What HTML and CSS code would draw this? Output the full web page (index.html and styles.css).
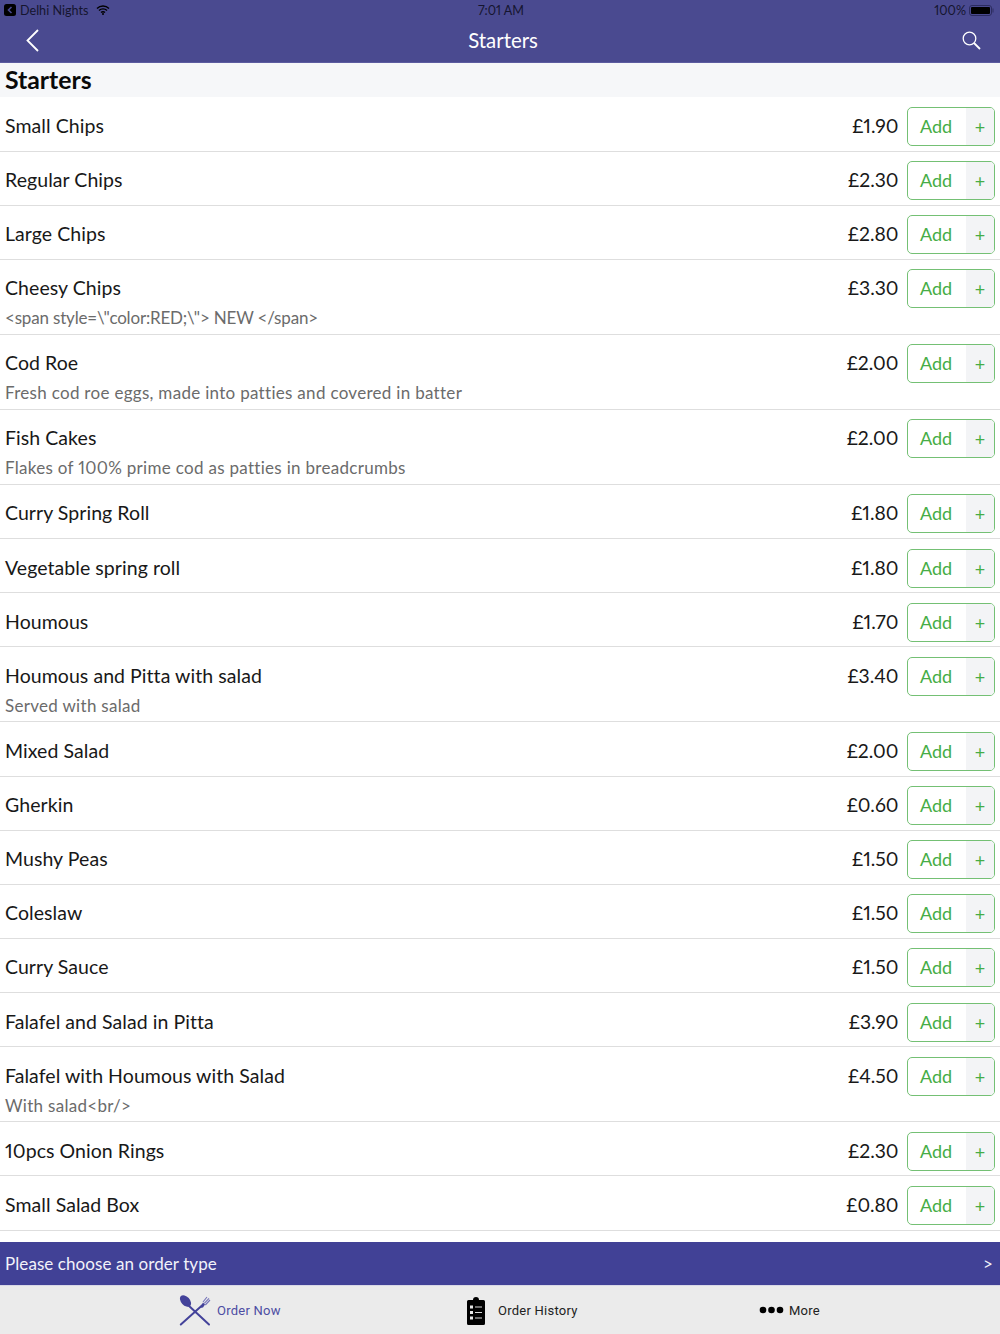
FILE: index.html
```html
<!DOCTYPE html>
<html>
<head>
  <title>Starters</title>
  <meta name="viewport" content="width=device-width, initial-scale=1">
  <link rel="stylesheet" href="styles.css">
</head>
<body>
  <header class="topbar">
    <div class="status">
      <div class="status-left">
        <svg class="back-app" width="12" height="12" viewBox="0 0 12 12"><rect width="12" height="12" rx="2.5" fill="#000"/><path d="M7.5 3 4.5 6l3 3" fill="none" stroke="#4a4a90" stroke-width="1.6"/></svg>
        <span>Delhi Nights</span>
        <svg class="wifi" width="14" height="10" viewBox="0 0 14 10"><path d="M1 3.5a8.5 8.5 0 0 1 12 0M3 5.6a5.6 5.6 0 0 1 8 0M5 7.6a2.8 2.8 0 0 1 4 0" fill="none" stroke="#000" stroke-width="1.4"/><circle cx="7" cy="9" r="1" fill="#000"/></svg>
      </div>
      <div class="status-time">7:01 AM</div>
      <div class="status-right">
        <span>100%</span>
        <svg width="25" height="11" viewBox="0 0 25 11"><rect x=".5" y=".5" width="22" height="10" rx="2.5" fill="none" stroke="#2c2c60"/><rect x="2" y="2" width="19" height="7" rx="1" fill="#000"/><rect x="23.5" y="3.5" width="1" height="4" fill="#2c2c60"/></svg>
      </div>
    </div>
    <div class="nav">
      <svg class="nav-back" width="13" height="23" viewBox="0 0 13 23"><path d="M12 1 1.5 11.500 12 22" fill="none" stroke="#fff" stroke-width="1.800"/></svg>
      <div class="nav-title">Starters</div>
      <svg class="nav-search" width="19" height="19" viewBox="0 0 19 19"><circle cx="7.500" cy="7.500" r="6.300" fill="none" stroke="#fff" stroke-width="1.300"/><path d="m12 12 6 6" stroke="#fff" stroke-width="1.800"/></svg>
    </div>
  </header>

  <h1 class="section">Starters</h1>

  <div class="list">
    <div class="item"><div class="item-text"><div class="name">Small Chips</div></div><div class="price">£1.90</div><div class="add"><span class="add-label">Add</span><span class="add-plus">+</span></div></div>
    <div class="item"><div class="item-text"><div class="name">Regular Chips</div></div><div class="price">£2.30</div><div class="add"><span class="add-label">Add</span><span class="add-plus">+</span></div></div>
    <div class="item"><div class="item-text"><div class="name">Large Chips</div></div><div class="price">£2.80</div><div class="add"><span class="add-label">Add</span><span class="add-plus">+</span></div></div>
    <div class="item tall"><div class="item-text"><div class="name">Cheesy Chips</div><div class="desc desc-code">&lt;span style=\"color:RED;\"&gt; NEW &lt;/span&gt;</div></div><div class="price">£3.30</div><div class="add"><span class="add-label">Add</span><span class="add-plus">+</span></div></div>
    <div class="item tall"><div class="item-text"><div class="name">Cod Roe</div><div class="desc">Fresh cod roe eggs, made into patties and covered in batter</div></div><div class="price">£2.00</div><div class="add"><span class="add-label">Add</span><span class="add-plus">+</span></div></div>
    <div class="item tall"><div class="item-text"><div class="name">Fish Cakes</div><div class="desc">Flakes of 100% prime cod as patties in breadcrumbs</div></div><div class="price">£2.00</div><div class="add"><span class="add-label">Add</span><span class="add-plus">+</span></div></div>
    <div class="item"><div class="item-text"><div class="name">Curry Spring Roll</div></div><div class="price">£1.80</div><div class="add"><span class="add-label">Add</span><span class="add-plus">+</span></div></div>
    <div class="item"><div class="item-text"><div class="name">Vegetable spring roll</div></div><div class="price">£1.80</div><div class="add"><span class="add-label">Add</span><span class="add-plus">+</span></div></div>
    <div class="item"><div class="item-text"><div class="name">Houmous</div></div><div class="price">£1.70</div><div class="add"><span class="add-label">Add</span><span class="add-plus">+</span></div></div>
    <div class="item tall"><div class="item-text"><div class="name">Houmous and Pitta with salad</div><div class="desc">Served with salad</div></div><div class="price">£3.40</div><div class="add"><span class="add-label">Add</span><span class="add-plus">+</span></div></div>
    <div class="item"><div class="item-text"><div class="name">Mixed Salad</div></div><div class="price">£2.00</div><div class="add"><span class="add-label">Add</span><span class="add-plus">+</span></div></div>
    <div class="item"><div class="item-text"><div class="name">Gherkin</div></div><div class="price">£0.60</div><div class="add"><span class="add-label">Add</span><span class="add-plus">+</span></div></div>
    <div class="item"><div class="item-text"><div class="name">Mushy Peas</div></div><div class="price">£1.50</div><div class="add"><span class="add-label">Add</span><span class="add-plus">+</span></div></div>
    <div class="item"><div class="item-text"><div class="name">Coleslaw</div></div><div class="price">£1.50</div><div class="add"><span class="add-label">Add</span><span class="add-plus">+</span></div></div>
    <div class="item"><div class="item-text"><div class="name">Curry Sauce</div></div><div class="price">£1.50</div><div class="add"><span class="add-label">Add</span><span class="add-plus">+</span></div></div>
    <div class="item"><div class="item-text"><div class="name">Falafel and Salad in Pitta</div></div><div class="price">£3.90</div><div class="add"><span class="add-label">Add</span><span class="add-plus">+</span></div></div>
    <div class="item tall"><div class="item-text"><div class="name">Falafel with Houmous with Salad</div><div class="desc">With salad&lt;br/&gt;</div></div><div class="price">£4.50</div><div class="add"><span class="add-label">Add</span><span class="add-plus">+</span></div></div>
    <div class="item"><div class="item-text"><div class="name">10pcs Onion Rings</div></div><div class="price">£2.30</div><div class="add"><span class="add-label">Add</span><span class="add-plus">+</span></div></div>
    <div class="item"><div class="item-text"><div class="name">Small Salad Box</div></div><div class="price">£0.80</div><div class="add"><span class="add-label">Add</span><span class="add-plus">+</span></div></div>
  </div>

  <div class="order-bar"><span>Please choose an order type</span><span>&gt;</span></div>

  <nav class="tabs">
    <div class="tab tab-active">
      <svg width="32" height="31" viewBox="0 0 32 31">
        <ellipse cx="6.500" cy="6" rx="4.300" ry="6.800" transform="rotate(-42 6.500 6)" fill="#43429a"/>
        <path d="M9 10 30 29.500M23 10.500 1.800 29.500" stroke="#43429a" stroke-width="2" stroke-linecap="round"/>
        <path d="M20.500 13 24 7.500 26 9.500 24 12.500Z" fill="#43429a"/>
        <path d="M24 7 28 2M25.300 8.300 30 3.300M26.300 10 31 5" stroke="#7473b8" stroke-width="1.100"/>
      </svg>
      <span>Order Now</span>
    </div>
    <div class="tab tab-history">
      <svg width="20" height="29" viewBox="0 0 20 29">
        <path d="M2.500 4H7a3 3 0 0 1 6 0h4.500A1.500 1.500 0 0 1 19 5.500v22a1.500 1.500 0 0 1-1.500 1.500h-15A1.500 1.500 0 0 1 1 27.500v-22A1.500 1.500 0 0 1 2.500 4Z" fill="#000"/>
        <path d="M4 9.500h3v3H4zM4 15h3v3H4zM4 20.500h3v3H4z" fill="#e8e8e8"/>
        <path d="M9 11h7M9 16.500h7M9 22h7" stroke="#d8d8d8" stroke-width="1.200"/>
      </svg>
      <span>Order History</span>
    </div>
    <div class="tab tab-more">
      <svg width="25" height="8" viewBox="0 0 25 8"><circle cx="4" cy="4" r="3.300"/><circle cx="12.500" cy="4" r="3.300"/><circle cx="21" cy="4" r="3.300"/></svg>
      <span>More</span>
    </div>
  </nav>
</body>
</html>
```

FILE: styles.css
```css
html {font-family: "Lato", "Open Sans", sans-serif; font-variant-numeric: proportional-nums;}
body {margin: 0; background: #fff; color: #111; height: 1334px; overflow: hidden;}

.topbar {height: 63px; background: #4a4a90; border-bottom: 1px solid #5c5ca0; box-sizing: border-box;}
.status {display: flex; justify-content: space-between; height: 20px; padding: 0 6px 0 4px; font-size: 12.6px; color: #15152f; position: relative;}
.status-left, .status-right {display: flex; align-items: center; gap: 4px;}
.status-right {gap: 3px;}
.status-left .wifi {margin-left: 4px;}
.status-time {position: absolute; left: 0; right: 0; top: 3px; text-align: center; line-height: 16px; padding-left: 2px;}
.nav {display: flex; align-items: center; justify-content: space-between; height: 40px; padding: 0 19px 0 26px; box-sizing: border-box; position: relative;}
.nav-title {color: #fff; font-size: 20.4px; position: absolute; left: 0; right: 0; text-align: center; padding-left: 6px;}

.section {margin: 0; height: 34px; line-height: 33px; padding-left: 5px; background: #f6f7f9; font-size: 24.8px; font-weight: 700; color: #0a0a0a;}

.list {padding-top: .6px;}
.item {display: flex; height: 54.15px; box-sizing: border-box; border-bottom: 1px solid #dedede; padding: 9.4px 5px 0; align-items: flex-start;}
.item.tall {height: 75px;}
.item-text {flex: 1; min-width: 0;}
.name {font-size: 19.5px; line-height: 37px; height: 38px; color: #181818; letter-spacing: .06px;}
.desc {font-size: 17px; line-height: 22px; color: #6b6b6b; letter-spacing: .3px;}
.desc-code {letter-spacing: -.18px;}
.price {font-size: 19.3px; line-height: 37px; margin-right: 8.5px; color: #181818;}

.add {display: flex; width: 88px; height: 39px; box-sizing: border-box; border: 1.3px solid #74c074; border-radius: 5px; overflow: hidden; color: #46ad46;}
.add-label {flex: 1; font-size: 18px; line-height: 36px; text-align: center; padding-right: 2px;}
.add-plus {width: 28px; background: #f3f4f6; font-size: 18px; line-height: 39px; text-align: center;}

.order-bar {display: flex; justify-content: space-between; align-items: center; height: 43px; margin-top: 11.3px; padding: 0 7px 0 5px; background: #414196; color: #f2f2fa; font-size: 17px; letter-spacing: .08px;}

.tabs {display: flex; height: 49px; background: #ebebeb; border-top: 1px solid #d8d8e6; box-sizing: border-box; font-family: "Roboto", sans-serif; font-size: 13px; letter-spacing: .25px; color: #222; position: relative;}
.tab {position: absolute; top: 0; height: 49px; display: flex; align-items: center; gap: 6px;}
.tab:nth-child(1) {left: 179px;}
.tab:nth-child(2) {left: 466px; gap: 12px;}
.tab:nth-child(3) {left: 759px; gap: 5px;}
.tab-active {color: #4d4da3;}
```
